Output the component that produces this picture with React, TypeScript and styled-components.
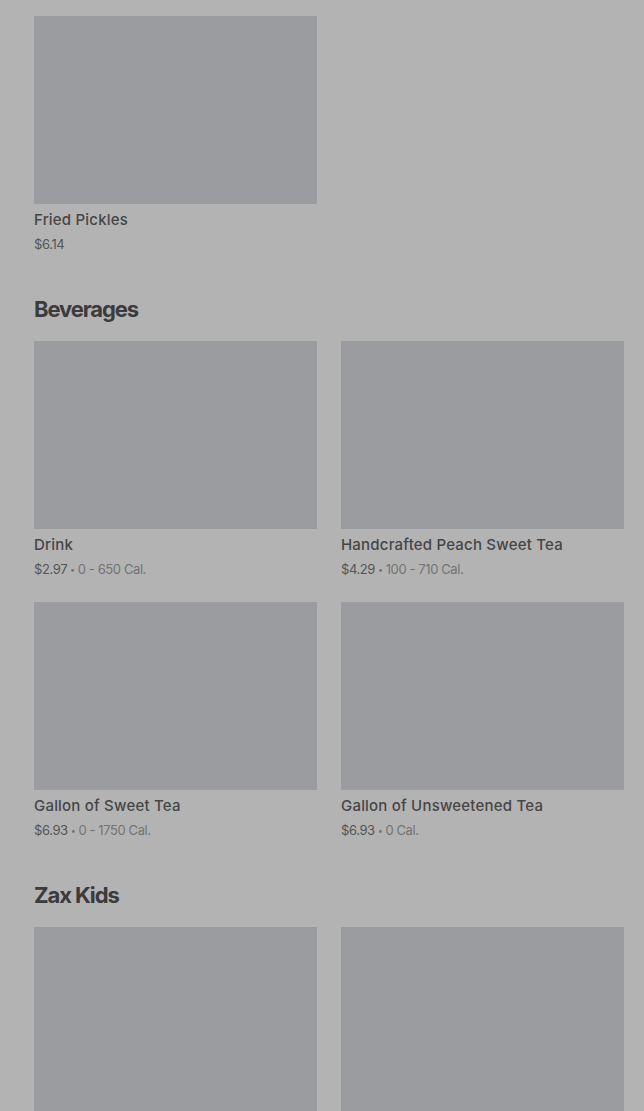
import React from "react";
import styled, { createGlobalStyle } from "styled-components";

const Global = createGlobalStyle`
  html, body { margin: 0; padding: 0; background: #b3b3b3; }
  body { font-family: Inter, "Noto Sans", Arial, sans-serif; }
`;

const Page = styled.div`
  padding: 16px 20px 0 34px;
  display: flex;
  flex-direction: column;
  height: 1111px;
  overflow: hidden;
  box-sizing: border-box;
`;

const Section = styled.section`
  display: flex;
  flex-direction: column;
  margin-bottom: 41px;
`;

const Heading = styled.h2`
  margin: 0 0 18px;
  font-size: 22px;
  line-height: 28px;
  font-weight: 700;
  letter-spacing: -1.1px;
  color: #3b3b3c;
`;

const Grid = styled.div`
  display: grid;
  grid-template-columns: 283px 283px;
  column-gap: 24px;
  row-gap: 23px;
`;

const Card = styled.div`
  display: flex;
  flex-direction: column;
`;

const Thumb = styled.div`
  height: 188px;
  background: #9b9ca0;
`;

const Title = styled.div`
  margin-top: 5px;
  font-size: 15px;
  line-height: 22px;
  font-weight: 500;
  color: #464647;
  letter-spacing: 0.2px;
`;

const Meta = styled.div`
  margin-top: 3px;
  height: 20px;
  font-size: 13px;
  line-height: 20px;
  color: #555556;
  letter-spacing: -0.4px;
  white-space: nowrap;
`;

const Cal = styled.span`
  color: #737375;
`;

const Dot = styled.span`
  font-size: 9px;
  line-height: 0;
  margin: 0 3px;
  vertical-align: 1px;
`;

type Item = { name: string; price: string; cal?: string };

const sections: { title?: string; items: Item[] }[] = [
  { items: [{ name: "Fried Pickles", price: "$6.14" }] },
  {
    title: "Beverages",
    items: [
      { name: "Drink", price: "$2.97", cal: "0 - 650 Cal." },
      { name: "Handcrafted Peach Sweet Tea", price: "$4.29", cal: "100 - 710 Cal." },
      { name: "Gallon of Sweet Tea", price: "$6.93", cal: "0 - 1750 Cal." },
      { name: "Gallon of Unsweetened Tea", price: "$6.93", cal: "0 Cal." },
    ],
  },
  {
    title: "Zax Kids",
    items: [
      { name: "", price: "" },
      { name: "", price: "" },
    ],
  },
];

export default function App() {
  return (
    <>
      <Global />
      <Page>
        {sections.map((s, i) => (
          <Section key={i}>
            {s.title && <Heading>{s.title}</Heading>}
            <Grid>
              {s.items.map((it, j) => (
                <Card key={j}>
                  <Thumb />
                  {it.name && <Title>{it.name}</Title>}
                  {it.price && (
                    <Meta>
                      {it.price}
                      {it.cal && (
                        <Cal>
                          <Dot>•</Dot>
                          {it.cal}
                        </Cal>
                      )}
                    </Meta>
                  )}
                </Card>
              ))}
            </Grid>
          </Section>
        ))}
      </Page>
    </>
  );
}
